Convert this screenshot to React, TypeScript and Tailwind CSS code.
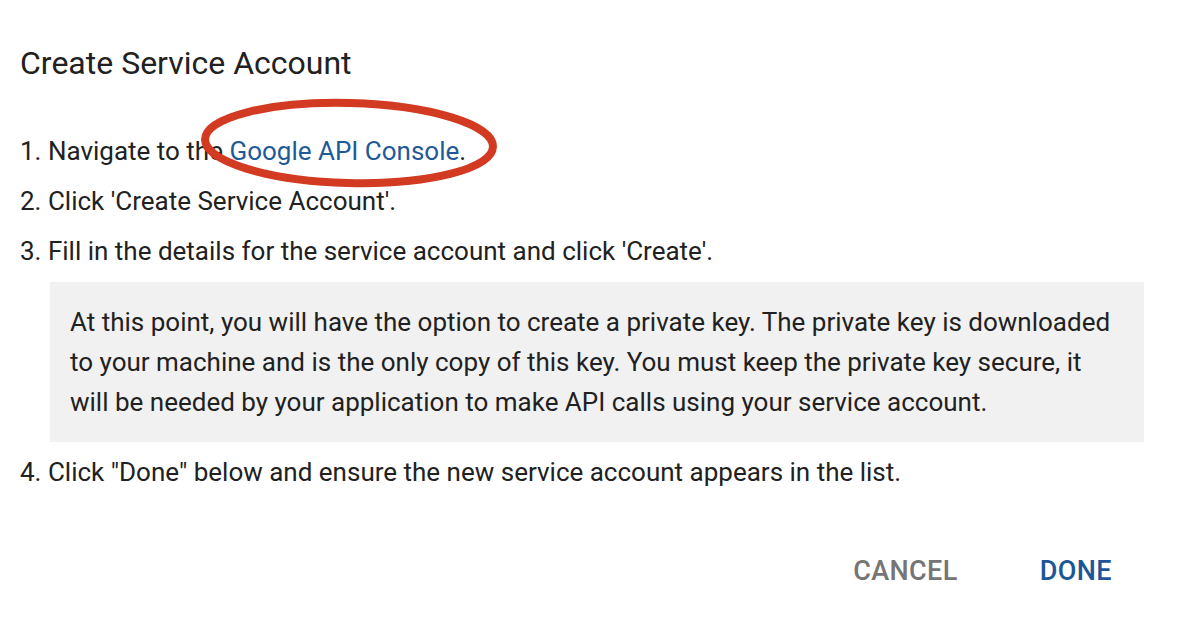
export default function App() {
  return (
    <div
      className="w-[1182px] h-[636px] bg-white text-[#212121] overflow-hidden"
      style={{ fontFamily: 'Roboto, "Liberation Sans", sans-serif' }}
    >
      <div className="pl-[20px] pr-[38px] pt-[43px]">
        <h1 className="text-[32px] leading-[40px] font-normal">Create Service Account</h1>

        <div className="mt-[43px] text-[26px]">
          <div className="relative leading-[50px]">
            1. Navigate to the{' '}
            <a href="#" className="text-[#1f5a98]">
              Google API Console
            </a>
            .
            {/* hand-drawn annotation circle */}
            <svg
              className="absolute left-[164px] top-[-34px] pointer-events-none"
              width="330"
              height="100"
              viewBox="0 0 330 100"
            >
              <ellipse
                cx="165"
                cy="51"
                rx="144"
                ry="40"
                fill="none"
                stroke="#d23a22"
                strokeWidth="8"
                transform="rotate(1.5 165 51)"
              />
            </svg>
          </div>
          <div className="leading-[50px]">2. Click 'Create Service Account'.</div>
          <div className="leading-[50px]">3. Fill in the details for the service account and click 'Create'.</div>

          <div className="ml-[30px] mt-[6px] mb-[5px] bg-[#f1f1f1] px-5 py-5 leading-[40px]">
            At this point, you will have the option to create a private key. The private key is downloaded
            to your machine and is the only copy of this key. You must keep the private key secure, it
            will be needed by your application to make API calls using your service account.
          </div>

          <div className="leading-[50px]">
            4. Click "Done" below and ensure the new service account appears in the list.
          </div>
        </div>

        <div className="mt-[50px] flex justify-end items-center gap-[50px] pr-[16px]">
          <button className="px-4 text-[27px] font-medium leading-[48px] text-[#757575] tracking-[0.4px]">
            CANCEL
          </button>
          <button className="px-4 text-[27px] font-medium leading-[48px] text-[#1d5697] tracking-[0.4px]">
            DONE
          </button>
        </div>
      </div>
    </div>
  );
}
